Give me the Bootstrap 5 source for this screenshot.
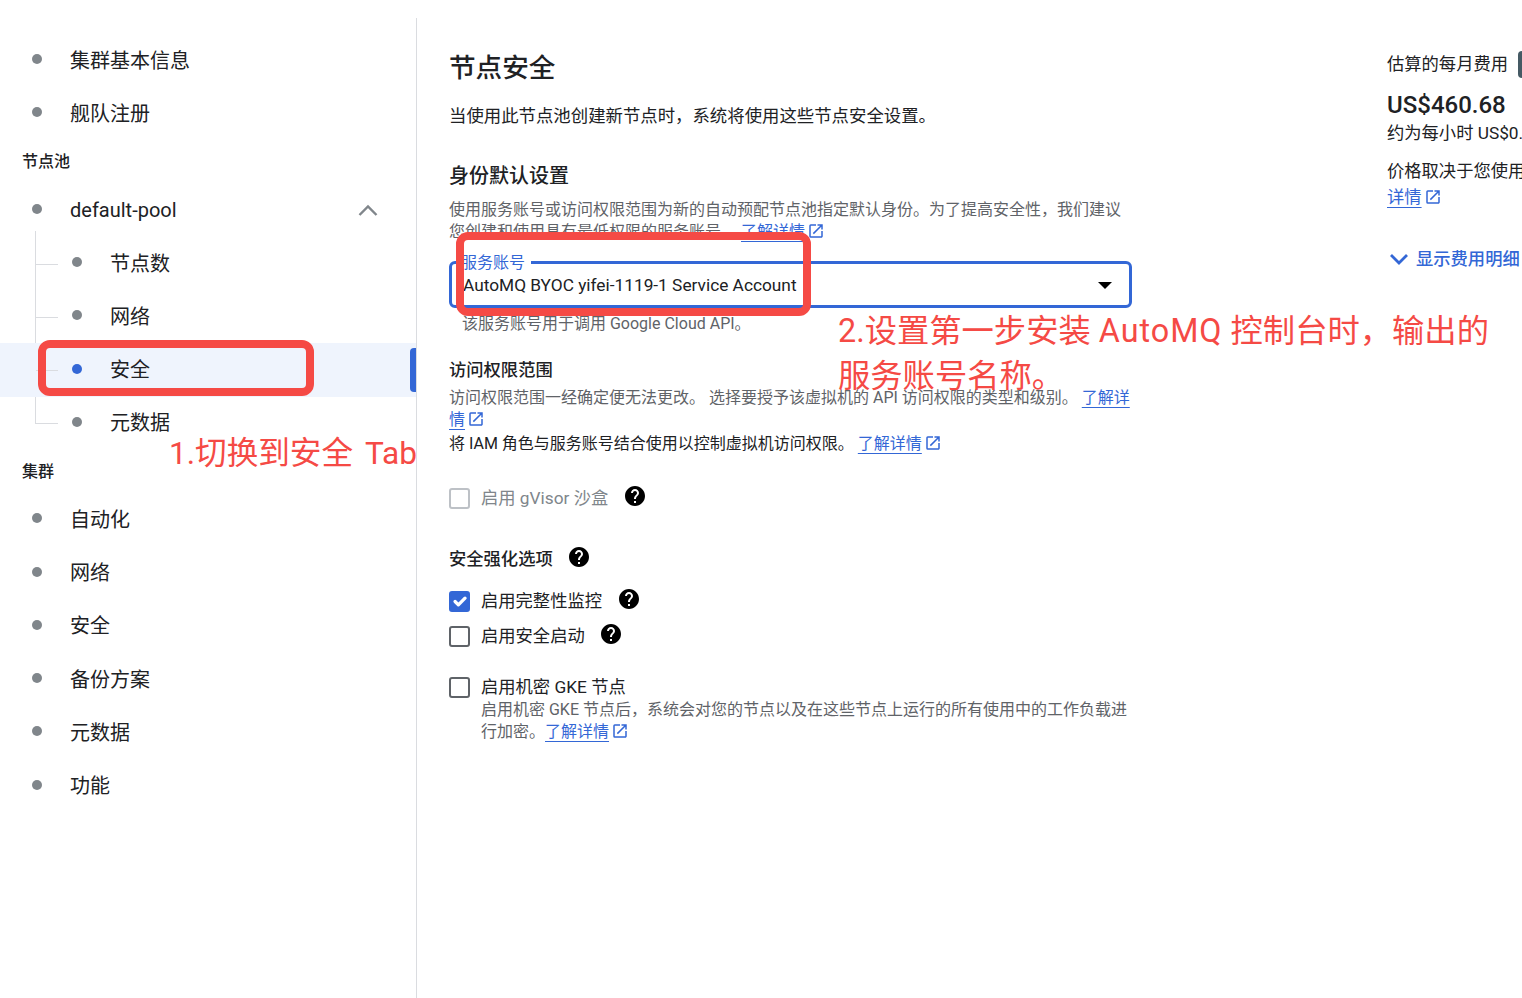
<!DOCTYPE html>
<html lang="zh-CN">

<head>
    <meta charset="UTF-8">
    <title>节点安全</title>
    <meta name="viewport" content="width=device-width, initial-scale=1">

    <link href="https://cdn.jsdelivr.net/npm/bootstrap@5.3.3/dist/css/bootstrap.min.css" rel="stylesheet">

    <style>
        html,
        body {
            height: 100%;
            overflow: hidden;
        }

        body {
            font-family: Roboto, "Noto Sans CJK SC", sans-serif;
            color: #202124;
            background: #fff;
        }

        .page-wrap {
            position: relative;
            width: 1522px;
            height: 998px;
            overflow: hidden;
        }

        /* sidebar */
        .side-col {
            width: 417px;
            height: 980px;
            margin-top: 18px;
            padding-top: 16px;
            border-right: 1px solid #dadce0;
            flex-shrink: 0;
        }

        .side-item {
            height: 53.3px;
            font-size: 20px;
            padding-left: 32px;
            position: relative;
        }

        .side-dot {
            width: 10px;
            height: 10px;
            border-radius: 50%;
            background: #80868b;
            margin-right: 28px;
            margin-top: -3px;
            flex-shrink: 0;
        }

        .side-sub {
            padding-left: 72px;
        }

        .side-sub::before {
            content: "";
            position: absolute;
            left: 36px;
            top: 50%;
            width: 22px;
            border-top: 1px solid #dadce0;
        }

        .side-tree {
            position: relative;
        }

        .side-tree::before {
            content: "";
            position: absolute;
            left: 35px;
            top: -6px;
            bottom: 26px;
            border-left: 1px solid #dadce0;
        }

        .side-active {
            background: #eff4fd;
        }

        .side-active .side-dot {
            background: #3367d6;
        }

        .side-bar {
            position: absolute;
            right: 0;
            top: 5px;
            bottom: 5px;
            width: 6px;
            border-radius: 4px 0 0 4px;
            background: #3367d6;
        }

        .side-head {
            height: 43px;
            font-size: 16px;
            font-weight: 500;
            padding-left: 22px;
        }

        .side-chevron {
            margin-left: auto;
            margin-right: 38px;
        }

        /* main column */
        .main-col {
            width: 715px;
            padding-left: 32px;
            flex-shrink: 0;
        }

        .sec-title {
            font-size: 26.6px;
            line-height: 36px;
            font-weight: 500;
            margin: 50px 0 0;
        }

        .sec-desc {
            font-size: 17.4px;
            line-height: 24px;
            margin: 18px 0 0;
        }

        .sec-head {
            font-size: 20px;
            line-height: 28px;
            font-weight: 500;
            margin: 34px 0 0;
        }

        .sec-sub {
            font-size: 17.3px;
            line-height: 24px;
            font-weight: 500;
        }

        .note-text {
            font-size: 16px;
            line-height: 22px;
            color: #5f6368;
            white-space: nowrap;
            margin: 0;
        }

        .note-dark {
            color: #202124;
        }

        .ext-link {
            color: #3367d6;
            text-decoration: underline;
            text-underline-offset: 4px;
            text-decoration-thickness: 1px;
        }

        .ext-icon {
            width: 18px;
            height: 18px;
            fill: #3367d6;
            vertical-align: -3px;
            margin-left: 2px;
        }

        .field-box {
            position: relative;
            height: 47px;
            margin-top: 18px;
            border: 3px solid #3367d6;
            border-radius: 6px;
            padding: 2px 17px 0 11px;
            font-size: 17.3px;
        }

        .field-label {
            position: absolute;
            left: 9px;
            top: -11px;
            padding-right: 6px;
            background: #fff;
            color: #3367d6;
            font-size: 16px;
            line-height: 20px;
        }

        .field-caret {
            width: 0;
            height: 0;
            border-left: 7px solid transparent;
            border-right: 7px solid transparent;
            border-top: 7px solid #000;
        }

        .check-row {
            height: 24px;
            font-size: 17.3px;
            line-height: 24px;
        }

        .check-row .form-check-input {
            width: 21px;
            height: 21px;
            margin: 0 11px 0 0;
            border: 2px solid #5f6368;
            border-radius: 3px;
            flex-shrink: 0;
        }

        .check-row .form-check-input:checked {
            background-color: #3367d6;
            border-color: #3367d6;
            background-size: 130%;
            background-position: center;
        }

        .check-row .form-check-input:disabled {
            border-color: #bdc1c6;
            opacity: 1;
        }

        .check-off {
            color: #80868b;
        }

        .help-icon {
            width: 24px;
            height: 24px;
            fill: #000;
            margin-left: 15px;
            margin-top: -4px;
            flex-shrink: 0;
        }

        .help-tight {
            margin-left: 14px;
        }

        /* cost panel */
        .cost-col {
            margin-left: 255px;
            white-space: nowrap;
            font-size: 17.3px;
            line-height: 22px;
        }

        .cost-label {
            margin-top: 50px;
            line-height: 24px;
        }

        .cost-btn {
            width: 30px;
            height: 27px;
            margin: 1px 0 0 10px;
            border-radius: 4px;
            background: #455a64;
            align-self: flex-start;
        }

        .cost-value {
            font-size: 24px;
            line-height: 30px;
            font-weight: 500;
            margin-top: 12px;
        }

        .cost-hour {
            margin-top: 2px;
        }

        .cost-note {
            margin-top: 16px;
        }

        .cost-toggle {
            color: #3367d6;
            font-weight: 500;
            line-height: 24px;
            margin-top: 39px;
            margin-left: 3px;
        }

        /* spacing of the form rows */
        .id-note { margin-top: 9px; }
        .hint-line { margin: 5px 0 0 13px; }
        .scope-head { margin-top: 23px; }
        .scope-text { margin-top: 5px; }
        .iam-line { margin-top: 2px; }
        .row-gvisor { margin-top: 31px; }
        .row-harden { margin-top: 37px; }
        .row-integrity { margin-top: 18px; }
        .row-secure { margin-top: 11px; }
        .row-conf { margin-top: 27px; }
        .conf-text { margin-left: 32px; }

        /* red annotations on top of the screenshot */
        .anno-box {
            position: absolute;
            border: 8px solid #f54a45;
            border-radius: 12px;
        }

        .anno-text {
            position: absolute;
            color: #f54a45;
            line-height: 45px;
            white-space: nowrap;
        }

        .anno-wide {
            letter-spacing: 1px;
        }

        #annoTab { left: 38px; top: 340px; width: 276px; height: 56px; }
        #annoField { left: 456px; top: 232px; width: 355px; height: 84px; }
        #annoTextTab { left: 169px; top: 431px; font-size: 31.6px; word-spacing: 4px; }
        #annoTextField { left: 838px; top: 309px; font-size: 32.3px; }
    </style>
</head>

<body>

    <svg class="d-none">
        <symbol id="ico-ext" viewBox="0 0 24 24">
            <path d="M19 19H5V5h7V3H5a2 2 0 0 0-2 2v14a2 2 0 0 0 2 2h14c1.1 0 2-.9 2-2v-7h-2v7zM14 3v2h3.59l-9.83 9.83 1.41 1.41L19 6.41V10h2V3h-7z" />
        </symbol>
        <symbol id="ico-help" viewBox="0 0 24 24">
            <path d="M12 2C6.48 2 2 6.48 2 12s4.48 10 10 10 10-4.48 10-10S17.52 2 12 2zm1 17h-2v-2h2v2zm2.07-7.75l-.9.92C13.45 12.9 13 13.5 13 15h-2v-.5c0-1.1.45-2.1 1.17-2.83l1.24-1.26c.37-.36.59-.86.59-1.41 0-1.1-.9-2-2-2s-2 .9-2 2H8c0-2.21 1.79-4 4-4s4 1.79 4 4c0 .88-.36 1.68-.93 2.25z" />
        </symbol>
    </svg>

    <div class="page-wrap d-flex">

        <!-- Sidebar -->
        <nav class="side-col">
            <div class="side-item d-flex align-items-center"><span class="side-dot"></span>集群基本信息</div>
            <div class="side-item d-flex align-items-center"><span class="side-dot"></span>舰队注册</div>
            <div class="side-head d-flex align-items-center">节点池</div>
            <div class="side-item d-flex align-items-center"><span class="side-dot"></span>default-pool
                <svg class="side-chevron" width="20" height="12" viewBox="0 0 20 12" fill="none" stroke="#80868b" stroke-width="2.4">
                    <path d="M1.500 11 10 2.500 18.500 11" />
                </svg>
            </div>
            <div class="side-tree">
                <div class="side-item side-sub d-flex align-items-center"><span class="side-dot"></span>节点数</div>
                <div class="side-item side-sub d-flex align-items-center"><span class="side-dot"></span>网络</div>
                <div class="side-item side-sub side-active d-flex align-items-center"><span class="side-dot"></span>安全<span class="side-bar"></span></div>
                <div class="side-item side-sub d-flex align-items-center"><span class="side-dot"></span>元数据</div>
            </div>
            <div class="side-head d-flex align-items-center">集群</div>
            <div class="side-item d-flex align-items-center"><span class="side-dot"></span>自动化</div>
            <div class="side-item d-flex align-items-center"><span class="side-dot"></span>网络</div>
            <div class="side-item d-flex align-items-center"><span class="side-dot"></span>安全</div>
            <div class="side-item d-flex align-items-center"><span class="side-dot"></span>备份方案</div>
            <div class="side-item d-flex align-items-center"><span class="side-dot"></span>元数据</div>
            <div class="side-item d-flex align-items-center"><span class="side-dot"></span>功能</div>
        </nav>

        <!-- Form -->
        <main class="main-col">
            <h1 class="sec-title">节点安全</h1>
            <p class="sec-desc">当使用此节点池创建新节点时，系统将使用这些节点安全设置。</p>

            <h2 class="sec-head">身份默认设置</h2>
            <p class="note-text id-note">使用服务账号或访问权限范围为新的自动预配节点池指定默认身份。为了提高安全性，我们建议<br>您创建和使用具有最低权限的服务账号。&nbsp;<a href="#" class="ext-link">了解详情</a><svg class="ext-icon"><use href="#ico-ext" /></svg></p>

            <div class="field-box d-flex align-items-center justify-content-between">
                <span class="field-label">服务账号</span>
                <span>AutoMQ BYOC yifei-1119-1 Service Account</span>
                <span class="field-caret"></span>
            </div>
            <p class="note-text hint-line">该服务账号用于调用 Google Cloud API。</p>

            <div class="sec-sub scope-head">访问权限范围</div>
            <p class="note-text scope-text">访问权限范围一经确定便无法更改。 选择要授予该虚拟机的 API 访问权限的类型和级别。 <a href="#" class="ext-link">了解详</a><br><a href="#" class="ext-link">情</a><svg class="ext-icon"><use href="#ico-ext" /></svg></p>
            <p class="note-text note-dark iam-line">将 IAM 角色与服务账号结合使用以控制虚拟机访问权限。 <a href="#" class="ext-link">了解详情</a><svg class="ext-icon"><use href="#ico-ext" /></svg></p>

            <div class="check-row d-flex align-items-center row-gvisor">
                <input class="form-check-input" type="checkbox" disabled>
                <span class="check-off">启用 gVisor 沙盒</span>
                <svg class="help-icon"><use href="#ico-help" /></svg>
            </div>

            <div class="sec-sub d-flex align-items-center row-harden">安全强化选项
                <svg class="help-icon help-tight"><use href="#ico-help" /></svg>
            </div>

            <div class="check-row d-flex align-items-center row-integrity">
                <input class="form-check-input" type="checkbox" checked>
                <span>启用完整性监控</span>
                <svg class="help-icon"><use href="#ico-help" /></svg>
            </div>
            <div class="check-row d-flex align-items-center row-secure">
                <input class="form-check-input" type="checkbox">
                <span>启用安全启动</span>
                <svg class="help-icon help-tight"><use href="#ico-help" /></svg>
            </div>
            <div class="check-row d-flex align-items-center row-conf">
                <input class="form-check-input" type="checkbox">
                <span>启用机密 GKE 节点</span>
            </div>
            <p class="note-text conf-text">启用机密 GKE 节点后，系统会对您的节点以及在这些节点上运行的所有使用中的工作负载进<br>行加密。<a href="#" class="ext-link">了解详情</a><svg class="ext-icon"><use href="#ico-ext" /></svg></p>
        </main>

        <!-- Cost -->
        <aside class="cost-col">
            <div class="cost-label d-flex align-items-center">估算的每月费用<span class="cost-btn"></span></div>
            <div class="cost-value">US$460.68</div>
            <div class="cost-hour">约为每小时 US$0.63</div>
            <div class="cost-note">价格取决于您使用的资源</div>
            <div class="mt-1"><a href="#" class="ext-link">详情</a><svg class="ext-icon"><use href="#ico-ext" /></svg></div>
            <div class="cost-toggle d-flex align-items-center gap-2">
                <svg width="18" height="12" viewBox="0 0 18 12" fill="none" stroke="#3367d6" stroke-width="2.8">
                    <path d="M1 2l8 8 8-8" />
                </svg>
                显示费用明细
            </div>
        </aside>

        <!-- Annotations -->
        <div class="anno-box" id="annoTab"></div>
        <div class="anno-box" id="annoField"></div>
        <div class="anno-text" id="annoTextTab">1.切换到安全 Tab</div>
        <div class="anno-text" id="annoTextField">2.设置第一步安装 <span class="anno-wide">AutoMQ</span> 控制台时，输出的<br>服务账号名称。</div>
    </div>

    <script src="https://cdn.jsdelivr.net/npm/bootstrap@5.3.3/dist/js/bootstrap.bundle.min.js"></script>
</body>

</html>
